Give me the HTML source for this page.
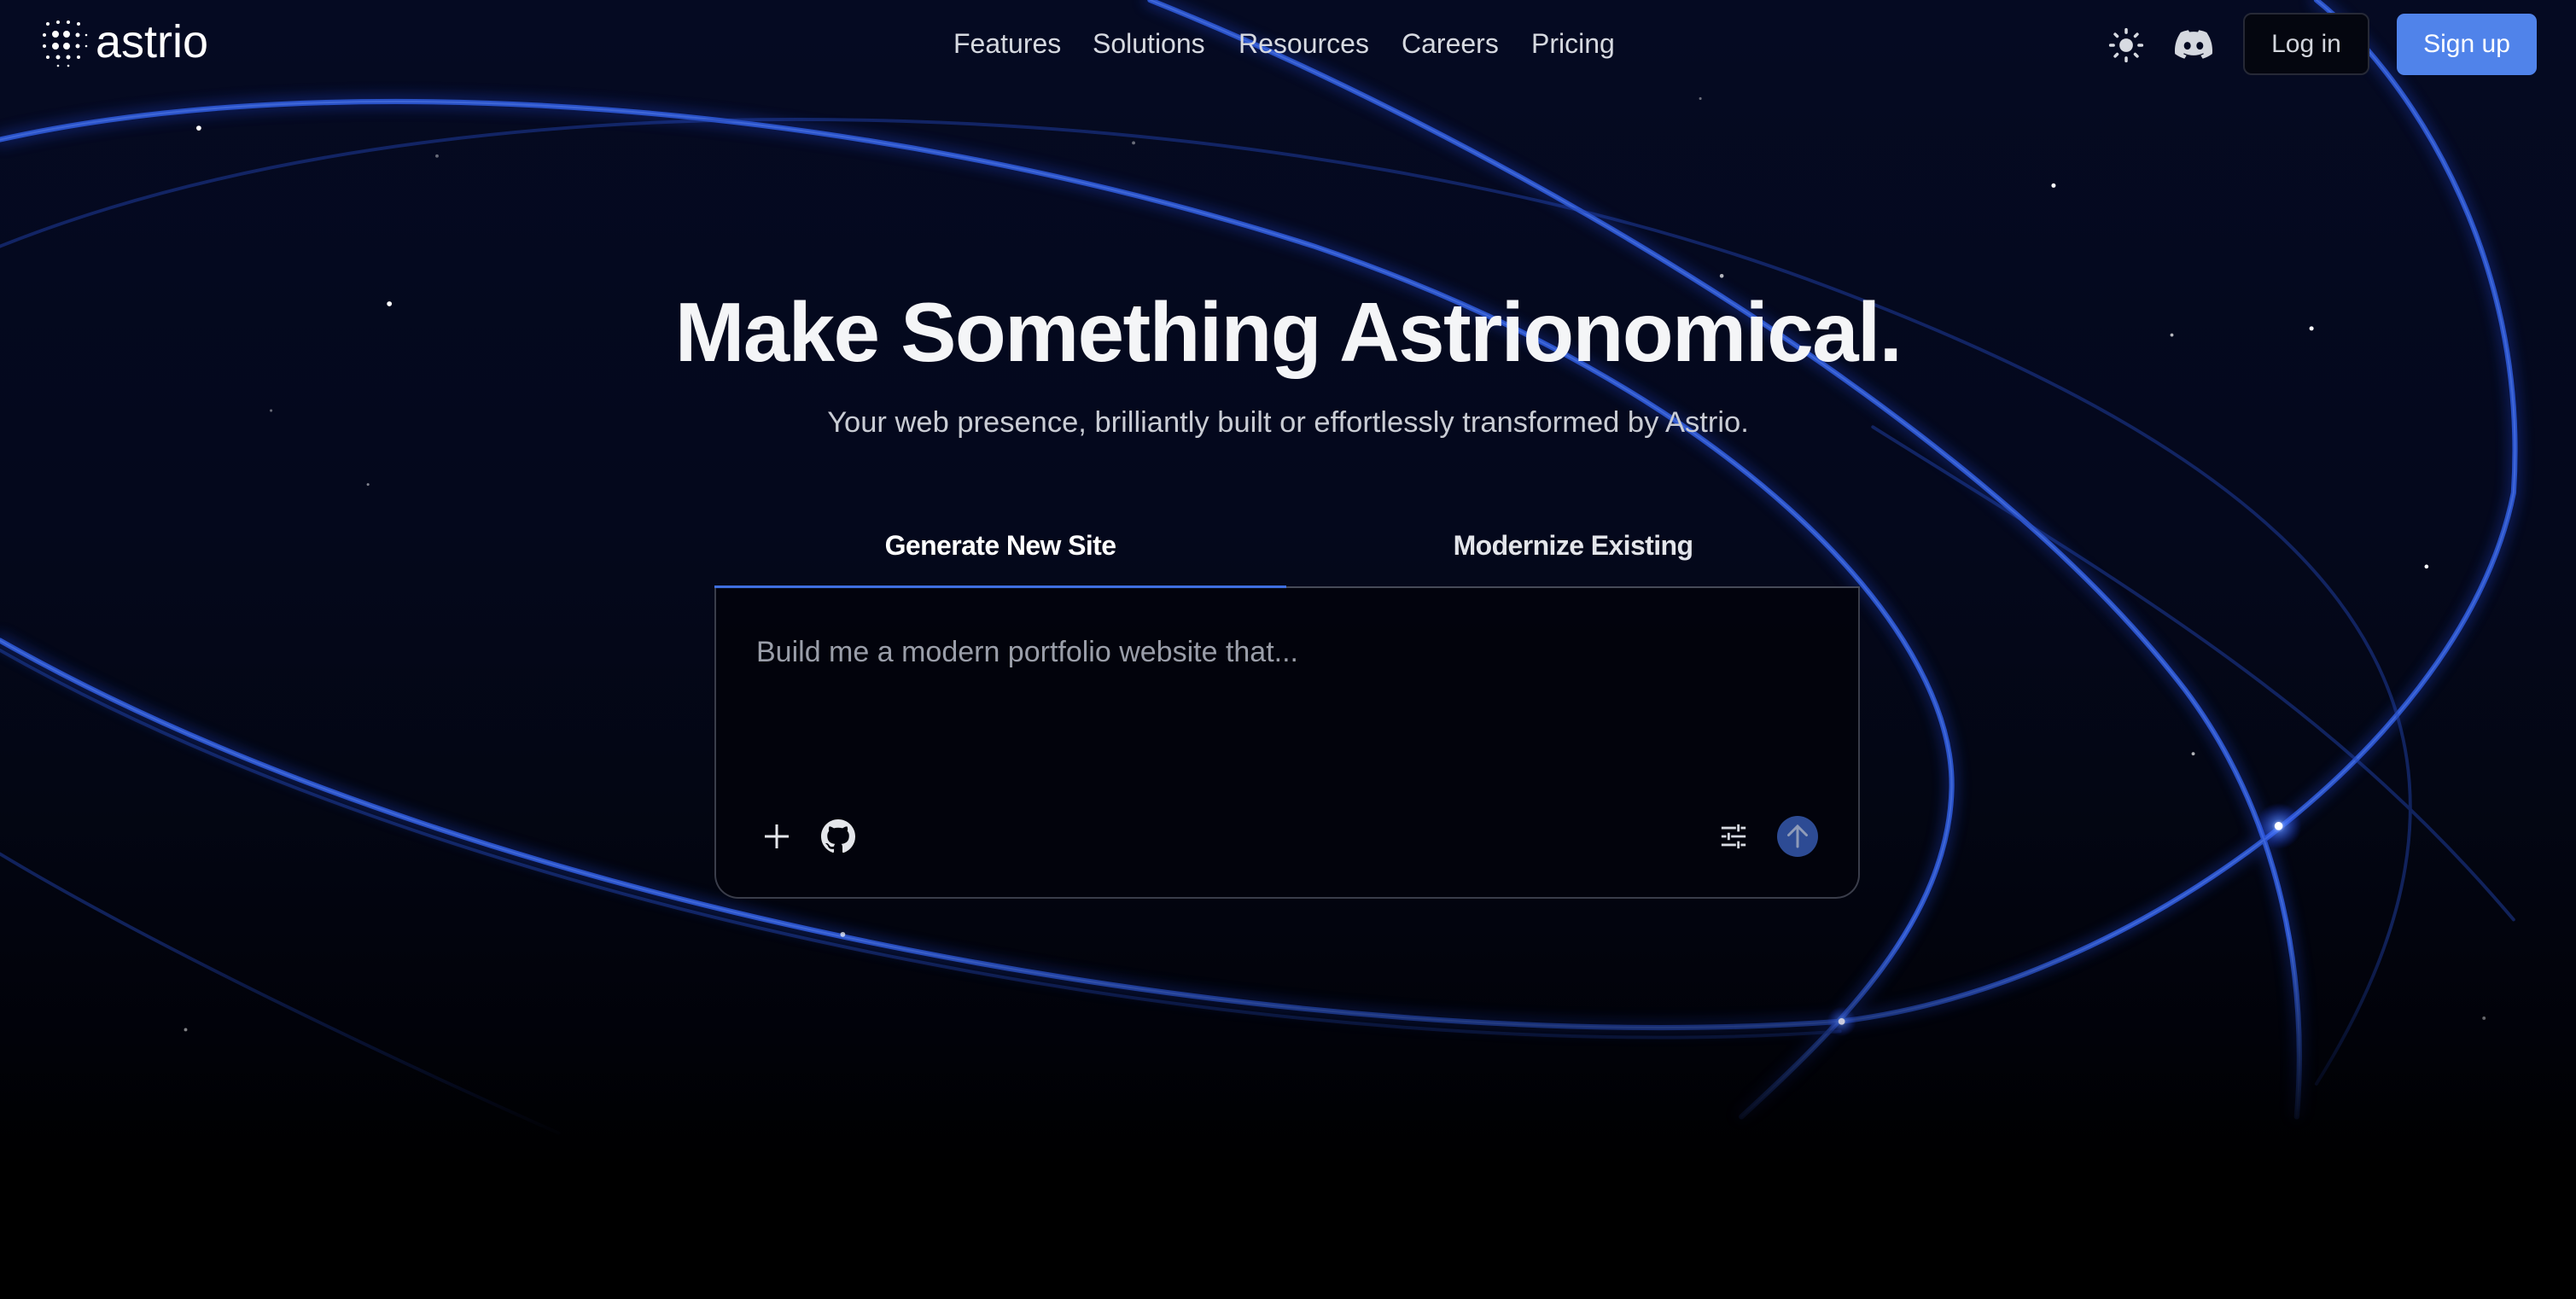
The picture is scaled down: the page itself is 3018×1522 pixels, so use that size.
<!DOCTYPE html>
<html><head><meta charset="utf-8"><style>
*{margin:0;padding:0;box-sizing:border-box}
html,body{width:3018px;height:1522px;overflow:hidden;background:#000}
body{position:relative;font-family:"Liberation Sans",sans-serif;color:#fff;
background:linear-gradient(180deg,#050a22 0%,#04081c 40%,#030613 62%,#010209 80%,#000 90%,#000 100%)}
svg.bg{position:absolute;left:0;top:0;width:3018px;height:1522px}
.abs{position:absolute;white-space:nowrap}
.nav{font-size:32px;color:#d6d9e0;top:33px}
h1{position:absolute;left:0;width:3018px;text-align:center;top:333px;font-size:98px;font-weight:700;letter-spacing:-1.6px;color:#f4f5f7}
.sub{left:0;width:3018px;text-align:center;top:476px;font-size:34.5px;color:#c9ccd4}
.tab{top:621px;font-size:32px;font-weight:700;letter-spacing:-0.6px}
.box{position:absolute;left:837px;top:689px;width:1342px;height:364px;border:2px solid #3a3d4a;border-top:none;border-radius:0 0 28px 28px;background:rgba(2,3,12,0.92)}
</style></head><body>
<svg class="bg" viewBox="0 0 1568 791" preserveAspectRatio="none">
<defs>
<filter id="g" x="-20%" y="-20%" width="140%" height="140%"><feGaussianBlur stdDeviation="4"/></filter>
<radialGradient id="glow" cx="0.5" cy="0.5" r="0.5"><stop offset="0" stop-color="#cfe0ff"/><stop offset="0.3" stop-color="#4d7dff" stop-opacity="0.6"/><stop offset="1" stop-color="#1a3cff" stop-opacity="0"/></radialGradient>
<linearGradient id="fade" x1="0" y1="0" x2="0" y2="1"><stop offset="0" stop-color="#fff"/><stop offset="0.72" stop-color="#fff"/><stop offset="0.88" stop-color="#fff" stop-opacity="0"/></linearGradient>
<mask id="m"><rect width="1568" height="791" fill="url(#fade)"/></mask>
</defs>
<g fill="none" stroke-linecap="round" mask="url(#m)">
<g stroke="#1c3db8" stroke-width="8" opacity="0.4" filter="url(#g)">
<path d="M0,85 C200,40 520,60 800,150 C1050,235 1190,380 1188,480 C1186,560 1120,625 1060,680"/>
<path d="M0,390 C300,560 800,645 1120,622 C1300,600 1500,450 1530,300 C1540,150 1460,40 1410,0"/>
<path d="M700,0 C900,80 1200,250 1330,420 C1390,500 1405,600 1398,680"/>
</g>
<g stroke="#2a52c8" stroke-width="3.2">
<path d="M0,85 C200,40 520,60 800,150 C1050,235 1190,380 1188,480 C1186,560 1120,625 1060,680"/>
<path d="M0,390 C300,560 800,645 1120,622 C1300,600 1500,450 1530,300 C1540,150 1460,40 1410,0"/>
<path d="M700,0 C900,80 1200,250 1330,420 C1390,500 1405,600 1398,680"/>
</g>
<g stroke="#4a72e0" stroke-width="1" opacity="0.7">
<path d="M0,85 C200,40 520,60 800,150 C1050,235 1190,380 1188,480 C1186,560 1120,625 1060,680"/>
<path d="M0,390 C300,560 800,645 1120,622 C1300,600 1500,450 1530,300 C1540,150 1460,40 1410,0"/>
<path d="M700,0 C900,80 1200,250 1330,420 C1390,500 1405,600 1398,680"/>
</g>
<g stroke="#2448b8" stroke-width="2" opacity="0.45">
<path d="M0,396 C300,566 800,651 1120,628"/>
<path d="M0,520 C100,580 250,650 340,690"/>
<path d="M0,150 C300,30 800,60 1100,170 C1400,280 1560,420 1410,660"/>
<path d="M1140,260 C1300,360 1420,430 1530,560"/>
</g>
</g>
<circle cx="1387" cy="503" r="14" fill="url(#glow)"/>
<circle cx="1387" cy="503" r="2.5" fill="#fff"/>
<circle cx="1121" cy="622" r="9" fill="url(#glow)" opacity="0.7"/>
<circle cx="1121" cy="622" r="2" fill="#ccd"/>
<g fill="#fff">
<circle cx="121" cy="78" r="1.5"/><circle cx="237" cy="185" r="1.5"/><circle cx="1250" cy="113" r="1.3"/><circle cx="1407" cy="200" r="1.3"/><circle cx="1048" cy="168" r="1.2" opacity="0.7"/><circle cx="1322" cy="204" r="1" opacity="0.7"/><circle cx="1477" cy="345" r="1.2"/><circle cx="1335" cy="459" r="1" opacity="0.7"/><circle cx="513" cy="569" r="1.5" opacity="0.7"/><circle cx="113" cy="627" r="1" opacity="0.5"/><circle cx="224" cy="295" r="0.8" opacity="0.5"/><circle cx="165" cy="250" r="0.8" opacity="0.4"/><circle cx="266" cy="95" r="1" opacity="0.4"/><circle cx="690" cy="87" r="1" opacity="0.4"/><circle cx="1512" cy="620" r="1" opacity="0.4"/><circle cx="1035" cy="60" r="0.8" opacity="0.4"/>
</g>
</svg>

<svg class="abs" style="left:46px;top:22px" width="60" height="60" viewBox="0 0 60 60" fill="#fff">
<circle cx="10" cy="6" r="2"/><circle cx="22" cy="4" r="2"/><circle cx="34" cy="4" r="2"/><circle cx="46" cy="6" r="2"/>
<circle cx="6" cy="19" r="2"/><circle cx="19" cy="18" r="4"/><circle cx="32" cy="18" r="4"/><circle cx="45" cy="19" r="2.5"/><circle cx="55" cy="19" r="1.3"/>
<circle cx="6" cy="32" r="2"/><circle cx="19" cy="32" r="4"/><circle cx="32" cy="32" r="4"/><circle cx="45" cy="32" r="2.5"/><circle cx="55" cy="32" r="1.3"/>
<circle cx="10" cy="45" r="2"/><circle cx="22" cy="45" r="2.5"/><circle cx="34" cy="45" r="2.5"/><circle cx="46" cy="45" r="2"/>
<circle cx="22" cy="55" r="1.3"/><circle cx="34" cy="55" r="1.3"/>
</svg>
<div class="abs" style="left:112px;top:18px;font-size:54px;color:#fff;letter-spacing:0px">astrio</div>

<div class="abs nav" style="left:1117px">Features</div>
<div class="abs nav" style="left:1280px">Solutions</div>
<div class="abs nav" style="left:1451px">Resources</div>
<div class="abs nav" style="left:1642px">Careers</div>
<div class="abs nav" style="left:1794px">Pricing</div>

<svg class="abs" style="left:2470px;top:32px" width="42" height="42" viewBox="0 0 24 24" fill="#d8dbe2" stroke="#d8dbe2" stroke-width="2" stroke-linecap="round">
<circle cx="12" cy="12" r="4.5" stroke="none"/>
<path d="M12 1.5v2M12 20.5v2M1.5 12h2M20.5 12h2M4.6 4.6l1.4 1.4M18 18l1.4 1.4M4.6 19.4L6 18M18 6l1.4-1.4"/>
</svg>
<svg class="abs" style="left:2548px;top:34px" width="44" height="36" viewBox="0 0 71 55" fill="#d5d8df">
<path d="M60.1 4.9A58.5 58.5 0 0 0 45.6.4a40 40 0 0 0-1.9 3.8 54 54 0 0 0-16.2 0A40 40 0 0 0 25.6.4 58.4 58.4 0 0 0 11 4.9C1.6 18.7-.9 32.2.3 45.5a59 59 0 0 0 17.9 9 43 43 0 0 0 3.8-6.2 38 38 0 0 1-6-2.9l1.5-1.1a42 42 0 0 0 36 0l1.5 1.1a38 38 0 0 1-6 2.9 43 43 0 0 0 3.8 6.2 58.8 58.8 0 0 0 17.9-9c1.5-15.4-2.5-28.8-10.6-40.6zM23.7 37.3c-3.5 0-6.4-3.2-6.4-7.2s2.8-7.2 6.4-7.2 6.5 3.3 6.4 7.2c0 4-2.8 7.2-6.4 7.2zm23.6 0c-3.5 0-6.4-3.2-6.4-7.2s2.8-7.2 6.4-7.2 6.5 3.3 6.4 7.2c0 4-2.8 7.2-6.4 7.2z"/>
</svg>
<div class="abs" style="left:2628px;top:15px;width:148px;height:73px;border:2px solid #262936;border-radius:10px;background:#04060f;font-size:30px;color:#d2d5dc;text-align:center;line-height:69px">Log in</div>
<div class="abs" style="left:2808px;top:16px;width:164px;height:72px;border-radius:9px;background:#5083ea;font-size:30px;color:#fff;text-align:center;line-height:72px">Sign up</div>

<h1>Make Something Astrionomical.</h1>
<div class="abs sub">Your web presence, brilliantly built or effortlessly transformed by Astrio.</div>

<div class="abs tab" style="left:837px;width:670px;text-align:center;color:#fff">Generate New Site</div>
<div class="abs tab" style="left:1507px;width:672px;text-align:center;color:#e3e5ea">Modernize Existing</div>
<div class="abs" style="left:837px;top:686px;width:670px;height:4px;background:#3f6fe0"></div>
<div class="abs" style="left:1507px;top:687px;width:672px;height:2px;background:#464a58"></div>
<div class="box"></div>
<div class="abs" style="left:886px;top:745px;font-size:34px;color:#9a9ea9">Build me a modern portfolio website that...</div>

<svg class="abs" style="left:894px;top:964px" width="32" height="32" viewBox="0 0 32 32" stroke="#e4e6ea" stroke-width="3"><path d="M16 2v28M2 16h28"/></svg>
<svg class="abs" style="left:962px;top:960px" width="40" height="40" viewBox="0 0 16 16" fill="#e4e6ea"><path d="M8 0C3.58 0 0 3.580 0 8c0 3.54 2.29 6.53 5.47 7.59.4.07.55-.17.55-.38v-1.33c-2.230.48-2.7-1.07-2.7-1.07-.36-.93-.89-1.17-.89-1.17-.73-.5.06-.49.06-.49.8.06 1.23.83 1.23.83.71 1.23 1.87.87 2.33.66.07-.52.28-.87.5-1.07-1.78-.2-3.64-.89-3.64-3.95 0-.87.31-1.59.82-2.150-.08-.2-.36-1.02.08-2.12 0 0 .67-.21 2.2.82a7.6 7.6 0 0 1 4 0c1.53-1.04 2.2-.82 2.2-.82.44 1.1.16 1.92.08 2.12.51.56.82 1.270.82 2.15 0 3.07-1.87 3.75-3.65 3.95.29.25.54.73.54 1.48v2.2c0 .21.15.46.55.38A8.01 8.01 0 0 0 16 8c0-4.42-3.58-8-8-8z"/></svg>
<svg class="abs" style="left:2014px;top:963px" width="34" height="34" viewBox="0 0 24 24" stroke="#d8dbe2" stroke-width="2"><path d="M2 5h12M18 5h4M16 2v6M2 12h4M10 12h12M8 9v6M2 19h12M18 19h4M16 16v6"/></svg>
<div class="abs" style="left:2082px;top:956px;width:48px;height:48px;border-radius:50%;background:#2d4b94"></div>
<svg class="abs" style="left:2088px;top:962px" width="36" height="36" viewBox="0 0 24 24" fill="none" stroke="#8f9bb8" stroke-width="2" stroke-linecap="round"><path d="M12 20V4M5 11l7-7 7 7"/></svg>
</body></html>
